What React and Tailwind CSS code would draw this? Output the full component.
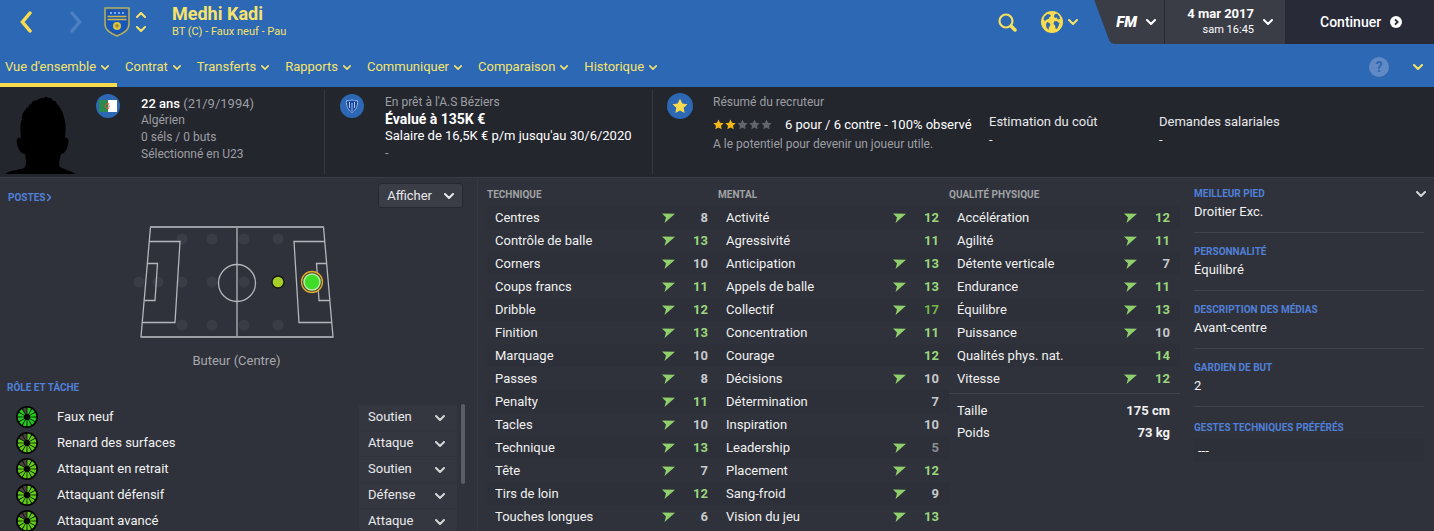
import React from 'react';

const tabs = ["Vue d'ensemble", 'Contrat', 'Transferts', 'Rapports', 'Communiquer', 'Comparaison', 'Historique'];

const roles = [
    { name: 'Faux neuf', duty: 'Soutien', color: '#25c91f', empty: 1 },
    { name: 'Renard des surfaces', duty: 'Attaque', color: '#62cc1a', empty: 2 },
    { name: 'Attaquant en retrait', duty: 'Soutien', color: '#62cc1a', empty: 2 },
    { name: 'Attaquant défensif', duty: 'Défense', color: '#62cc1a', empty: 2 },
    { name: 'Attaquant avancé', duty: 'Attaque', color: '#62cc1a', empty: 2 },
];

const duties = ['Défense', 'Soutien', 'Attaque'];

// [name, value, trend arrow]
const technique = [
    ['Centres', 8, true],
    ['Contrôle de balle', 13, true],
    ['Corners', 10, true],
    ['Coups francs', 11, true],
    ['Dribble', 12, true],
    ['Finition', 13, true],
    ['Marquage', 10, true],
    ['Passes', 8, true],
    ['Penalty', 11, true],
    ['Tacles', 10, true],
    ['Technique', 13, true],
    ['Tête', 7, true],
    ['Tirs de loin', 12, true],
    ['Touches longues', 6, true],
];

const mental = [
    ['Activité', 12, true],
    ['Agressivité', 11, false],
    ['Anticipation', 13, true],
    ['Appels de balle', 13, true],
    ['Collectif', 17, true],
    ['Concentration', 11, true],
    ['Courage', 12, false],
    ['Décisions', 10, true],
    ['Détermination', 7, false],
    ['Inspiration', 10, false],
    ['Leadership', 5, true],
    ['Placement', 12, true],
    ['Sang-froid', 9, true],
    ['Vision du jeu', 13, true],
];

const physique = [
    ['Accélération', 12, true],
    ['Agilité', 11, true],
    ['Détente verticale', 7, true],
    ['Endurance', 11, true],
    ['Équilibre', 13, true],
    ['Puissance', 10, true],
    ['Qualités phys. nat.', 14, false],
    ['Vitesse', 12, true],
];

const details = [
    ['Meilleur pied', 'Droitier Exc.'],
    ['Personnalité', 'Équilibré'],
    ['Description des médias', 'Avant-centre'],
    ['Gardien de but', '2'],
];

const valueColor = (value) => {
    if (value > 15) return 'text-[#72b848]';
    if (value > 10) return 'text-[#9bd67c]';
    if (value > 5) return 'text-[#c6c8cc]';
    return 'text-[#8b8d91]';
};

const Chevron = ({ className }) => (
    <svg viewBox="0 0 10 6" fill="none" stroke="currentColor" strokeWidth="2" strokeLinecap="round" strokeLinejoin="round" className={className} aria-hidden="true">
        <path d="M1 1l4 4 4-4" />
    </svg>
);

const Star = ({ className }) => (
    <svg viewBox="0 0 24 24" fill="currentColor" className={className} aria-hidden="true">
        <path d="M12 1l3.4 7.2 7.8 1-5.7 5.5 1.4 7.8-6.9-3.8-6.9 3.8 1.4-7.8L.8 9.2l7.8-1z" />
    </svg>
);

const TrendArrow = () => (
    <svg viewBox="0 0 13 10" className="block w-[13px] h-[10px]" role="img" aria-label="Stable">
        <path d="M0 0.5L13 0.8 2.500 10 4 4.500z" fill="#8fd06c" />
    </svg>
);

const Crest = () => (
    <svg viewBox="0 0 26 30" className="w-[26px] h-[30px]" role="img" aria-label="Pau">
        <path d="M1 1h24v16c0 6-5 9-12 12C6 26 1 23 1 17z" fill="#1c5fc4" stroke="#b5ae5e" strokeWidth="1.5" />
        <path d="M3 3h20v14c0 5-4 7.5-10 10C7 24.5 3 22 3 17z" fill="#1557c0" stroke="#3a4f77" strokeWidth="0.8" />
        <path d="M3.5 9.5h19M3.5 12.5h19" stroke="#cdb944" strokeWidth="1.6" />
        <path d="M6 6h2M10 6h2M14 6h2M18 6h2" stroke="#a9c5ee" strokeWidth="1.4" />
        <circle cx="13" cy="19" r="4" fill="#d9c33f" />
        <path d="M11 18l2-1 2 1-1 2.5h-2z" fill="#a08c2a" />
    </svg>
);

const Globe = () => (
    <svg viewBox="0 0 22 22" className="w-[22px] h-[22px]" aria-hidden="true">
        <circle cx="11" cy="11" r="11" fill="#f9dc4e" />
        <path d="M3.500 5.500l3-2.500 2.500.5 1 1.500-1.500 1-1 2-2 .5L4 10 2.500 8.500zM6 11l2.500 1 1 2-1.500 2-.5 3-2-2.500-.5-3zM13.500 3.500l2.500-1 2.500 3 .5 2.500-2 .5-1.500-2-1.500.5-1-1.500zM13 10.500l2.500-.5 2 1.500 1 .5-1 3-1.500 3-1.500-.5-.5-3-1.500-1.500z" fill="#2c68b3" />
    </svg>
);

const Silhouette = () => (
    <svg viewBox="0 0 70 78" className="w-[70px] h-[78px] shrink-0" role="img" aria-label="Medhi Kadi">
        <path
            d="M0 78c5-4 14-4 19-6 3-2 2-8 1-14-4 0-7-5-8-10-1-4 0-7 4-6-1-7-1-14 1-19-1-2 1-3 0-5 2 0 1-4 4-4-1-3 2-2 3-4-1-2 2-1 3-3 0-3 2-1 3-3 2 2 3-2 5-1 1-2 3 0 4-1 1-2 3-1 4 0 3-1 4 2 6 3 2-1 2 3 4 4 2 1 1 3 3 4 0 2 2 2 2 5 3 8 3 15 2 24 4-1 4 3 3 7-1 5-4 9-7 9-1 5-3 9-1 13 5 3 11 4 16 7z"
            fill="#000"
        />
    </svg>
);

const RoleWheel = ({ color, empty }) => (
    <svg viewBox="0 0 22 22" className="block w-[22px] h-[22px]" aria-hidden="true">
        <circle cx="11" cy="11" r="11" fill="#050705" />
        {Array.from({ length: 12 }, (_, i) => (
            <path
                key={i}
                d="M11.3 7.7L11.500 1.800A9.200 9.200 0 0 1 15.200 2.800L12.400 8z"
                fill={i >= 12 - empty ? '#4a4340' : color}
                transform={`rotate(${i * 30} 11 11)`}
            />
        ))}
    </svg>
);

const Pitch = () => (
    <svg viewBox="130 222 214 120" className="block w-[214px] h-[120px]" role="img" aria-label="Terrain, poste de buteur">
        <g fill="#3a3d45">
            {[182, 212, 244, 278].map((x) => (
                <React.Fragment key={x}>
                    <circle cx={x} cy="239" r="5.5" />
                    <circle cx={x} cy="325" r="5.5" />
                </React.Fragment>
            ))}
            {[139, 158, 182, 212, 244].map((x) => (
                <circle key={x} cx={x} cy="282" r="5.5" />
            ))}
        </g>
        <g fill="none" stroke="#b4b6bb" strokeWidth="1.3">
            <path d="M150.5 227L141 337M323.5 227L333 337M237 227V337" />
            <path d="M149 241.5H180L175 322.5H142M147.5 263.5H157.5L155 300.5H144.5" />
            <path d="M325 241.5H294L299 322.5H332M326.5 263.5H316.5L319 300.5H329.5" />
            <circle cx="237" cy="283" r="18.5" />
            <path d="M150 227H324M140.5 337H333.5" strokeWidth="2" stroke="#9b9ea5" />
        </g>
        <circle cx="278" cy="282" r="6" fill="#a5cf27" stroke="#14180c" strokeWidth="1.3" />
        <circle cx="312" cy="282" r="10.5" fill="#4c4630" stroke="#e0a92c" strokeWidth="1.3" />
        <circle cx="312" cy="282" r="8" fill="#3fdc28" stroke="#b4f0a4" strokeWidth="1.5" />
    </svg>
);

const AttributeTable = ({ title, rows }) => (
    <table className="w-full table-fixed border-collapse">
        <caption className="h-[22px] text-left text-[10px] leading-[22px] font-bold text-[#a0a2a6] uppercase">{title}</caption>
        <tbody>
            {rows.map(([name, value, trend]) => (
                <tr key={name} className="h-[23px] odd:bg-[#2d3038]">
                    <th scope="row" className="pl-2 text-left font-normal whitespace-nowrap">{name}</th>
                    <td className="w-6">{trend && <TrendArrow />}</td>
                    <td className={`w-8 pr-[10px] text-right font-bold ${valueColor(value)}`}>{value}</td>
                </tr>
            ))}
        </tbody>
    </table>
);

const Header = () => (
    <header className="bg-[#2c68b3] text-[#f6e36c]">
        <div className="flex h-[45px] items-start">
            <div className="flex h-11 items-center">
                <button aria-label="Précédent" className="ml-5">
                    <svg viewBox="0 0 12 22" fill="none" stroke="#f9dc4e" strokeWidth="3.5" strokeLinecap="round" className="w-3 h-[22px]"><path d="M10 2L2.5 11 10 20" /></svg>
                </button>
                <button aria-label="Suivant" className="ml-[38px]">
                    <svg viewBox="0 0 12 22" fill="none" stroke="#4d80c0" strokeWidth="3.5" strokeLinecap="round" className="w-3 h-[22px]"><path d="M2 2l7.5 9L2 20" /></svg>
                </button>
                <span className="ml-[22px]"><Crest /></span>
                <div className="ml-[6px] flex flex-col gap-2">
                    <button aria-label="Joueur précédent"><Chevron className="block w-[10px] h-[6px] rotate-180" /></button>
                    <button aria-label="Joueur suivant"><Chevron className="block w-[10px] h-[6px]" /></button>
                </div>
                <div className="ml-[26px]">
                    <h1 className="text-[18px] leading-5 font-bold">Medhi Kadi</h1>
                    <p className="text-[11px] leading-4">BT (C) - Faux neuf - Pau</p>
                </div>
            </div>
            <div className="ml-auto flex h-11 items-center">
                <button aria-label="Rechercher">
                    <svg viewBox="0 0 19 19" fill="none" stroke="#f6e05e" className="w-[19px] h-[19px]">
                        <circle cx="8" cy="8" r="6.5" strokeWidth="2.2" />
                        <path d="M13.5 13.5l3.500 3.500" strokeWidth="3.5" strokeLinecap="round" />
                    </svg>
                </button>
                <button aria-label="Monde" className="ml-6 flex items-center gap-[5px]">
                    <Globe />
                    <Chevron className="w-[10px] h-[6px]" />
                </button>
                <div className="ml-4 flex h-full bg-[#3a3c46] text-white [clip-path:polygon(0_0,100%_0,100%_100%,20px_100%,17px_98%,15px_92%)]">
                    <button aria-label="Menu FM" className="flex items-center gap-[9px] border-r border-[#282a34] pr-2 pl-[22px]">
                        <span className="text-[15px] font-black italic">FM</span>
                        <Chevron className="w-[10px] h-[6px]" />
                    </button>
                    <button className="flex w-[120px] items-center justify-end gap-[9px] pr-3">
                        <span className="text-right">
                            <span className="block text-[13px] leading-4 font-bold">4 mar 2017</span>
                            <span className="block text-[11px] leading-4">sam 16:45</span>
                        </span>
                        <Chevron className="w-[10px] h-[6px]" />
                    </button>
                    <button className="flex w-[149px] items-center gap-[9px] bg-[#282a37] pl-[35px] text-[14px] font-medium">
                        Continuer
                        <svg viewBox="0 0 12 12" className="w-3 h-3" aria-hidden="true">
                            <circle cx="6" cy="6" r="6" fill="#fff" />
                            <path d="M5 3.3L7.7 6 5 8.7" fill="none" stroke="#282a37" strokeWidth="1.8" />
                        </svg>
                    </button>
                </div>
            </div>
        </div>
        <div className="flex h-[42px] items-stretch">
            <nav className="flex">
                {tabs.map((tab, i) => (
                    <a
                        key={tab}
                        href="#"
                        className={`flex items-center gap-[5px] border-b-4 pt-[6px] pr-2 ${i === 0 ? 'border-[#f9dc4e] pl-[5px]' : 'border-transparent pl-2'}`}
                    >
                        {tab}
                        <Chevron className="w-2 h-[5px]" />
                    </a>
                ))}
            </nav>
            <div className="ml-auto flex items-center gap-6 pt-[2px] pr-[11px]">
                <button aria-label="Aide" className="size-5 rounded-full bg-[#6189c4] text-[14px] leading-5 font-bold text-[#2c68b3]">?</button>
                <button aria-label="Déplier"><Chevron className="w-[10px] h-[6px]" /></button>
            </div>
        </div>
    </header>
);

const Summary = () => (
    <section className="grid h-[91px] shrink-0 grid-cols-[325fr_328fr_781fr] border-b border-[#3a3c45] bg-[#24262e] text-[#9c9ea2]">
        <div className="my-[3px] flex border-r border-[#363842] pl-[5px]">
            <div className="flex items-end"><Silhouette /></div>
            <span className="mt-1 ml-[21px] grid size-6 shrink-0 place-items-center rounded-full bg-[#2c68b3]">
                <svg viewBox="0 0 18 12" className="w-[18px] h-3" role="img" aria-label="Algérie">
                    <path d="M0 0h9v12H0z" fill="#2c8a50" />
                    <path d="M9 0h9v12H9z" fill="#fff" />
                    <path d="M10.2 4.200A2.300 2.300 0 1 0 10.2 7.800" fill="none" stroke="#d8503c" strokeWidth="1.1" />
                    <circle cx="10" cy="6" r="0.8" fill="#d8503c" />
                </svg>
            </span>
            <div className="mt-[5px] ml-[21px] leading-[17px]">
                <p><span className="font-medium text-white">22 ans</span> (21/9/1994)</p>
                <p className="text-[12px]">Algérien</p>
                <p className="text-[12px]">0 séls / 0 buts</p>
                <p className="text-[12px]">Sélectionné en U23</p>
            </div>
        </div>
        <div className="my-[3px] flex border-r border-[#363842] pl-[15px]">
            <span className="mt-1 grid size-6 shrink-0 place-items-center rounded-full bg-[#2c68b3]">
                <svg viewBox="0 0 14 14" className="size-[14px]" role="img" aria-label="A.S Béziers">
                    <path d="M1.5 1.5C4 2 5.5 1.5 7 .8c1.5.7 3 1.2 5.5.7.5 5-1 9-5.5 12C2.5 10.5 1 6.5 1.5 1.5z" fill="#17479b" stroke="#8fb0e6" strokeWidth="1" />
                    <path d="M4.5 3v6M7 4v8M9.5 3v6" stroke="#a9c3ee" strokeWidth="1" />
                </svg>
            </span>
            <div className="mt-1 ml-[21px] leading-[17px]">
                <p className="text-[12px]">En prêt à l'A.S Béziers</p>
                <p className="text-[14px] font-bold text-white">Évalué à 135K €</p>
                <p className="leading-4 text-white">Salaire de 16,5K € p/m jusqu'au 30/6/2020</p>
                <p>-</p>
            </div>
        </div>
        <div className="my-[3px] flex pl-[14px]">
            <span className="mt-[3px] grid size-[26px] shrink-0 place-items-center rounded-full bg-[#2c68b3]">
                <Star className="size-4 text-[#f9dc4e]" />
            </span>
            <div className="mt-1 ml-5 w-[276px] text-[12px] leading-[17px]">
                <p>Résumé du recruteur</p>
                <div className="mt-[5px] mb-[3px] flex items-center">
                    <span className="flex gap-px" role="img" aria-label="2 étoiles sur 5">
                        {[1, 2, 3, 4, 5].map((n) => (
                            <Star key={n} className={n <= 2 ? 'size-[11px] text-[#f2b71a]' : 'size-[11px] text-[#63656c]'} />
                        ))}
                    </span>
                    <span className="ml-[13px] text-[13px] whitespace-nowrap text-white">6 pour / 6 contre - 100% observé</span>
                </div>
                <p>A le potentiel pour devenir un joueur utile.</p>
            </div>
            <div className="mt-[23px] w-[170px] leading-[18px] text-[#e8e9eb]">
                <p>Estimation du coût</p>
                <p>-</p>
            </div>
            <div className="mt-[23px] leading-[18px] text-[#e8e9eb]">
                <p>Demandes salariales</p>
                <p>-</p>
            </div>
        </div>
    </section>
);

const Positions = () => (
    <section className="border-r border-[#363942]">
        <div className="flex items-center justify-between pt-[5px] pr-[14px] pl-2">
            <a href="#" className="flex items-center pt-1 text-[10px] font-bold text-[#5180d8]">
                POSTES
                <Chevron className="w-2 h-[5px] -rotate-90" />
            </a>
            <button className="flex h-[25px] items-center gap-3 rounded-[3px] border border-[#262831] bg-[#3a3c46] px-2 text-[#e8e9eb]">
                Afficher
                <Chevron className="w-[10px] h-[6px]" />
            </button>
        </div>
        <div className="mt-[14px] flex flex-col items-center pr-1">
            <Pitch />
            <p className="mt-[10px] leading-[18px] text-[#a6a8ac]">Buteur (Centre)</p>
        </div>
        <h2 className="mt-[9px] pl-[7px] text-[10px] leading-[18px] font-bold text-[#5180d8]">RÔLE ET TÂCHE</h2>
        <div className="mt-[7px] flex">
            <ul className="flex-1">
                {roles.map((role) => (
                    <li key={role.name} className="flex h-[26px] items-center pl-4">
                        <RoleWheel color={role.color} empty={role.empty} />
                        <label htmlFor={role.name} className="ml-[19px] text-[#f1f1f2]">{role.name}</label>
                        <div className="relative ml-auto">
                            <select id={role.name} defaultValue={role.duty} className="block h-[25px] w-[98px] appearance-none bg-[#353740] pl-[9px] text-[#e8e9eb]">
                                {duties.map((duty) => <option key={duty}>{duty}</option>)}
                            </select>
                            <Chevron className="pointer-events-none absolute top-[10px] right-3 w-[10px] h-[6px] text-[#d4d5d8]" />
                        </div>
                    </li>
                ))}
            </ul>
            <div className="mr-3 ml-1 h-20 w-1 rounded-full bg-[#5b5e66]"></div>
        </div>
    </section>
);

const Attributes = () => (
    <section className="grid grid-cols-3 items-start pt-[6px] pl-[9px] text-[#f1f1f2]">
        <AttributeTable title="Technique" rows={technique} />
        <AttributeTable title="Mental" rows={mental} />
        <div>
            <AttributeTable title="Qualité physique" rows={physique} />
            <dl className="mt-[3px] border-t border-[#41434c] pt-[6px] pr-[10px] pl-2 leading-[22px]">
                <div className="flex justify-between"><dt>Taille</dt><dd className="font-bold">175 cm</dd></div>
                <div className="flex justify-between"><dt>Poids</dt><dd className="font-bold">73 kg</dd></div>
            </dl>
        </div>
    </section>
);

const Details = () => (
    <aside className="relative pt-[7px] pr-[10px] pl-[14px] text-[#f1f1f2]">
        <button aria-label="Options" className="absolute top-[13px] right-2 text-[#d4d5d8]"><Chevron className="block w-[10px] h-[6px]" /></button>
        {details.map(([title, value]) => (
            <div key={title} className="mb-[10px] h-12 border-b border-[#41434c]">
                <h2 className="text-[10px] leading-[18px] font-bold text-[#5180d8] uppercase">{title}</h2>
                <p className="leading-[18px]">{value}</p>
            </div>
        ))}
        <h2 className="mt-3 text-[10px] leading-[18px] font-bold text-[#5180d8] uppercase">Gestes techniques préférés</h2>
        <p className="mt-[2px] bg-[#2d3038] pl-1 leading-[23px]">---</p>
    </aside>
);

const App = () => {
    return (
        <div className="flex h-screen flex-col overflow-hidden bg-[#2f323a] font-[Roboto,sans-serif] text-[13px]">
            <Header />
            <Summary />
            <main className="grid min-h-0 flex-1 grid-cols-[478fr_702fr_254fr]">
                <Positions />
                <Attributes />
                <Details />
            </main>
        </div>
    );
};

export default App;
